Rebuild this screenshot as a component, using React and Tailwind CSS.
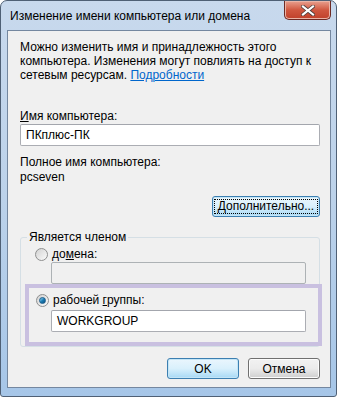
import React from 'react';

const font = { fontFamily: '"Liberation Sans", "DejaVu Sans", sans-serif' };

const Radio = ({ checked }) => (
  <span className="w-[13px] h-[13px] rounded-full border border-[#8e8f8f] bg-gradient-to-br from-[#d2d2d2] to-[#fbfbfb] flex items-center justify-center shrink-0">
    {checked && (
      <span className="w-[7px] h-[7px] rounded-full bg-gradient-to-br from-[#8fd8f8] via-[#1c7fb6] to-[#0d4e7f] border border-[#1a5d8c]" />
    )}
  </span>
);

const Field = ({ value, disabled, className = '' }) => (
  <div
    className={`h-[22px] border rounded-[2px] flex items-center px-[5px] text-[12px] text-black ${
      disabled ? 'border-[#adb2b5] bg-[#f0f0f0]' : 'border-[#abadb3] border-t-[#a3a6ad] bg-white'
    } ${className}`}
  >
    {value}
  </div>
);

const Button = ({ children, focused, className = '' }) => (
  <div
    className={`h-[21px] rounded-[3px] border flex items-center justify-center text-[12px] text-black ${
      focused
        ? 'border-[#3c7fb1] bg-gradient-to-b from-[#eaf6fd] via-[#d9f0fc] to-[#a7d9f5] shadow-[inset_0_0_0_1px_#c4e5f6]'
        : 'border-[#707070] bg-gradient-to-b from-[#f2f2f2] via-[#ebebeb] to-[#cfcfcf] shadow-[inset_0_0_0_1px_#fcfcfc]'
    } ${className}`}
  >
    {children}
  </div>
);

const App = () => {
  return (
    <div className="w-[337px] h-[397px] bg-white" style={font}>
      <div className="w-full h-full flex flex-col rounded-t-[7px] rounded-b-[3px] border border-[#4f6075] bg-gradient-to-b from-[#c8d9ed] via-[#bcd2ea] to-[#a6c6e8] pl-[6px] pr-[5px] pb-[8px]">
        <div className="h-[29px] flex items-start justify-between">
          <span className="pt-[8px] pl-[3px] text-[12px] leading-[14px] text-black">Изменение имени компьютера или домена</span>
          <div className="w-[47px] h-[19px] rounded-b-[5px] border border-t-0 border-[#6d2a24] bg-gradient-to-b from-[#e8a08f] via-[#d0573f] to-[#c0402a] flex items-center justify-center shadow-[inset_0_0_0_1px_#eab4a6]">
            <svg width="14" height="11" viewBox="0 0 14 11">
              <path d="M2 1.5 L12 9.5 M12 1.5 L2 9.5" stroke="#4a3c3a" strokeWidth="3.6" strokeLinecap="square" />
              <path d="M2 1.5 L12 9.5 M12 1.5 L2 9.5" stroke="#ffffff" strokeWidth="2.2" strokeLinecap="square" />
            </svg>
          </div>
        </div>
        <div className="flex-1 border border-[#74879f] bg-[#f0f0f0] pl-[12px] pr-[10px] pt-[9px] flex flex-col text-[12px] text-black leading-[14px]">
          <p>
            Можно изменить имя и принадлежность этого
            <br />
            компьютера. Изменения могут повлиять на доступ к
            <br />
            сетевым ресурсам. <span className="text-[#0066cc] underline">Подробности</span>
          </p>
          <div className="mt-[27px]">
            <span className="underline">И</span>мя компьютера:
          </div>
          <Field value="ПКплюс-ПК" className="mt-[1px]" />
          <div className="mt-[9px]">Полное имя компьютера:</div>
          <div className="mt-[1px]">pcseven</div>
          <div className="flex justify-end mt-[12px]">
            <Button focused className="w-[108px]">
              <span className="border border-dotted border-black px-[3px] leading-[13px]">
                <span className="underline">Д</span>ополнительно...
              </span>
            </Button>
          </div>
          <div className="mt-[20px] border border-[#d5dfe5] rounded-[3px] h-[110px] flex flex-col relative">
            <span className="absolute -top-[8px] left-[6px] bg-[#f0f0f0] px-[2px]">Является членом</span>
            <div className="mt-[9px] pl-[14px] flex items-center gap-[4px]">
              <Radio />
              <span>
                до<span className="underline">м</span>ена:
              </span>
            </div>
            <Field disabled value="" className="ml-[30px] mr-[13px] mt-[1px]" />
            <div className="ml-[4px] -mr-[3px] border-[4px] border-[#c9c0e0] flex flex-col flex-1">
              <div className="mt-[5px] pl-[7px] flex items-center gap-[4px]">
                <Radio checked />
                <span>
                  рабочей <span className="underline">г</span>руппы:
                </span>
              </div>
              <Field value="WORKGROUP" className="ml-[22px] mr-[12px] mt-[3px]" />
            </div>
          </div>
          <div className="flex justify-end gap-[9px] mt-[11px]">
            <Button focused className="w-[72px]">OK</Button>
            <Button className="w-[72px]">Отмена</Button>
          </div>
        </div>
      </div>
    </div>
  );
};

export default App;
